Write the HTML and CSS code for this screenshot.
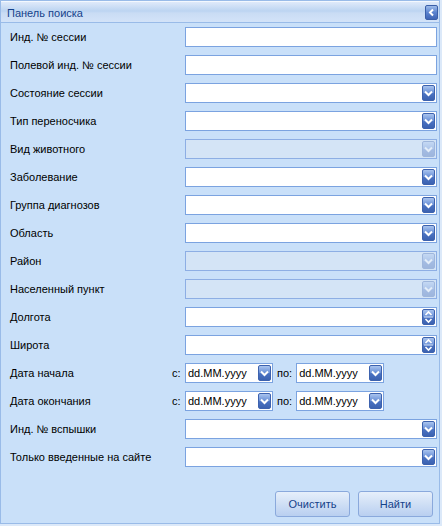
FILE: index.html
```html
<!DOCTYPE html>
<html>
<head>
<meta charset="utf-8">
<link rel="stylesheet" href="styles.css">
</head>
<body>
<div class="panel">
  <div class="header">
    <span class="title">Панель поиска</span>
    <span class="tool"><svg width="7" height="9" viewBox="0 0 7 9"><path d="M5 1.5 L2 4.5 L5 7.5" fill="none" stroke="#fff" stroke-width="2"/></svg></span>
  </div>
  <div class="form">
    <div class="row"><span class="lbl">Инд. № сессии</span><div class="field"></div></div>
    <div class="row"><span class="lbl">Полевой инд. № сессии</span><div class="field"></div></div>
    <div class="row"><span class="lbl">Состояние сессии</span><div class="field"><span class="trig"><svg width="9" height="7" viewBox="0 0 9 7"><path d="M1 1.5 L4.5 5 L8 1.5" fill="none" stroke="#fff" stroke-width="2"/></svg></span></div></div>
    <div class="row"><span class="lbl">Тип переносчика</span><div class="field"><span class="trig"><svg width="9" height="7" viewBox="0 0 9 7"><path d="M1 1.5 L4.5 5 L8 1.5" fill="none" stroke="#fff" stroke-width="2"/></svg></span></div></div>
    <div class="row"><span class="lbl">Вид животного</span><div class="field disabled"><span class="trig"><svg width="9" height="7" viewBox="0 0 9 7"><path d="M1 1.5 L4.5 5 L8 1.5" fill="none" stroke="#fff" stroke-width="2"/></svg></span></div></div>
    <div class="row"><span class="lbl">Заболевание</span><div class="field"><span class="trig"><svg width="9" height="7" viewBox="0 0 9 7"><path d="M1 1.5 L4.5 5 L8 1.5" fill="none" stroke="#fff" stroke-width="2"/></svg></span></div></div>
    <div class="row"><span class="lbl">Группа диагнозов</span><div class="field"><span class="trig"><svg width="9" height="7" viewBox="0 0 9 7"><path d="M1 1.5 L4.5 5 L8 1.5" fill="none" stroke="#fff" stroke-width="2"/></svg></span></div></div>
    <div class="row"><span class="lbl">Область</span><div class="field"><span class="trig"><svg width="9" height="7" viewBox="0 0 9 7"><path d="M1 1.5 L4.5 5 L8 1.5" fill="none" stroke="#fff" stroke-width="2"/></svg></span></div></div>
    <div class="row"><span class="lbl">Район</span><div class="field disabled"><span class="trig"><svg width="9" height="7" viewBox="0 0 9 7"><path d="M1 1.5 L4.5 5 L8 1.5" fill="none" stroke="#fff" stroke-width="2"/></svg></span></div></div>
    <div class="row"><span class="lbl">Населенный пункт</span><div class="field disabled"><span class="trig"><svg width="9" height="7" viewBox="0 0 9 7"><path d="M1 1.5 L4.5 5 L8 1.5" fill="none" stroke="#fff" stroke-width="2"/></svg></span></div></div>
    <div class="row"><span class="lbl">Долгота</span><div class="field"><span class="trig spin"><svg width="9" height="16" viewBox="0 0 9 16"><path d="M1.5 6 L4.5 3 L7.5 6" fill="none" stroke="#fff" stroke-width="1.6"/><path d="M0 8 H9" stroke="#dbe6f7" stroke-width="1"/><path d="M1.5 10 L4.5 13 L7.5 10" fill="none" stroke="#fff" stroke-width="1.6"/></svg></span></div></div>
    <div class="row"><span class="lbl">Широта</span><div class="field"><span class="trig spin"><svg width="9" height="16" viewBox="0 0 9 16"><path d="M1.5 6 L4.5 3 L7.5 6" fill="none" stroke="#fff" stroke-width="1.6"/><path d="M0 8 H9" stroke="#dbe6f7" stroke-width="1"/><path d="M1.5 10 L4.5 13 L7.5 10" fill="none" stroke="#fff" stroke-width="1.6"/></svg></span></div></div>
    <div class="row"><span class="lbl">Дата начала</span>
      <div class="dates"><span class="pre">с:</span><div class="field date"><span class="val">dd.MM.yyyy</span><span class="trig"><svg width="9" height="7" viewBox="0 0 9 7"><path d="M1 1.5 L4.5 5 L8 1.5" fill="none" stroke="#fff" stroke-width="2"/></svg></span></div><span class="po">по:</span><div class="field date"><span class="val">dd.MM.yyyy</span><span class="trig"><svg width="9" height="7" viewBox="0 0 9 7"><path d="M1 1.5 L4.5 5 L8 1.5" fill="none" stroke="#fff" stroke-width="2"/></svg></span></div></div></div>
    <div class="row"><span class="lbl">Дата окончания</span>
      <div class="dates"><span class="pre">с:</span><div class="field date"><span class="val">dd.MM.yyyy</span><span class="trig"><svg width="9" height="7" viewBox="0 0 9 7"><path d="M1 1.5 L4.5 5 L8 1.5" fill="none" stroke="#fff" stroke-width="2"/></svg></span></div><span class="po">по:</span><div class="field date"><span class="val">dd.MM.yyyy</span><span class="trig"><svg width="9" height="7" viewBox="0 0 9 7"><path d="M1 1.5 L4.5 5 L8 1.5" fill="none" stroke="#fff" stroke-width="2"/></svg></span></div></div></div>
    <div class="row"><span class="lbl">Инд. № вспышки</span><div class="field"><span class="trig"><svg width="9" height="7" viewBox="0 0 9 7"><path d="M1 1.5 L4.5 5 L8 1.5" fill="none" stroke="#fff" stroke-width="2"/></svg></span></div></div>
    <div class="row"><span class="lbl">Только введенные на сайте</span><div class="field"><span class="trig"><svg width="9" height="7" viewBox="0 0 9 7"><path d="M1 1.5 L4.5 5 L8 1.5" fill="none" stroke="#fff" stroke-width="2"/></svg></span></div></div>
  </div>
  <div class="footer">
    <button class="btn">Очистить</button>
    <button class="btn">Найти</button>
  </div>
</div>
</body>
</html>
```
FILE: styles.css
```css
html, body {
  margin: 0;
  padding: 0;
  background: #dce9f9;
  font-family: "Liberation Sans", Arial, sans-serif;
  font-size: 11px;
  color: #000;
}
.panel {
  width: 438px;
  height: 522px;
  border: 1px solid #99bbe8;
  background: #c9e0f9;
  display: flex;
  flex-direction: column;
}
.header {
  box-sizing: border-box;
  height: 22px;
  border-top: 1px solid #f3f8fe;
  border-bottom: 1px solid #99bbe8;
  background: linear-gradient(to bottom, #dfeafa 0%, #bcd4f1 45%, #c9dcf4 55%, #d3e3f8 100%);
  display: flex;
  align-items: center;
  justify-content: space-between;
  padding: 0 0 0 6px;
}
.title {
  color: #15428b;
  font-size: 11px;
  padding-top: 1px;
}
.tool {
  width: 13px;
  height: 15px;
  margin-right: 1px;
  border-radius: 2px;
  background: linear-gradient(to bottom, #9dbbe9 0%, #5b83cf 50%, #3f65b5 100%);
  border: 1px solid #3b5fa8;
  box-sizing: border-box;
  display: flex;
  align-items: center;
  justify-content: center;
}
.form {
  padding: 4px 2px 0 9px;
  display: flex;
  flex-direction: column;
  gap: 8px;
  flex: 1;
}
.row {
  display: flex;
  align-items: center;
  height: 20px;
}
.lbl {
  flex: 1;
}
.field {
  width: 252px;
  height: 20px;
  box-sizing: border-box;
  border: 1px solid #7ba3e0;
  background: #fff;
  display: flex;
  align-items: center;
  justify-content: flex-end;
  padding-right: 1px;
}
.field.disabled {
  background: #d4e4f6;
  border-color: #8daee4;
}
.trig {
  width: 13px;
  height: 16px;
  box-sizing: border-box;
  border-radius: 2px;
  border: 1px solid #3d62ae;
  background: linear-gradient(to bottom, #a9c4ef 0%, #6d93d8 45%, #4a72c2 55%, #3c62b0 100%);
  display: flex;
  align-items: center;
  justify-content: center;
}
.disabled .trig {
  opacity: 0.35;
}
.dates {
  width: 265px;
  display: flex;
  align-items: center;
}
.pre {
  width: 13px;
}
.po {
  margin: 0 4px 0 4px;
}
.field.date {
  width: 88px;
  justify-content: space-between;
  padding-left: 2px;
}
.val {
  font-size: 11px;
}
.footer {
  display: flex;
  justify-content: flex-end;
  gap: 8px;
  padding: 0 6px 6px 0;
}
.btn {
  width: 75px;
  height: 26px;
  border: 1px solid #8aa9dc;
  border-radius: 3px;
  background: linear-gradient(to bottom, #e6effb 0%, #cfdff5 50%, #b9cff0 100%);
  font-family: "Liberation Sans", Arial, sans-serif;
  font-size: 11px;
  color: #15428b;
  padding: 0;
}
```
